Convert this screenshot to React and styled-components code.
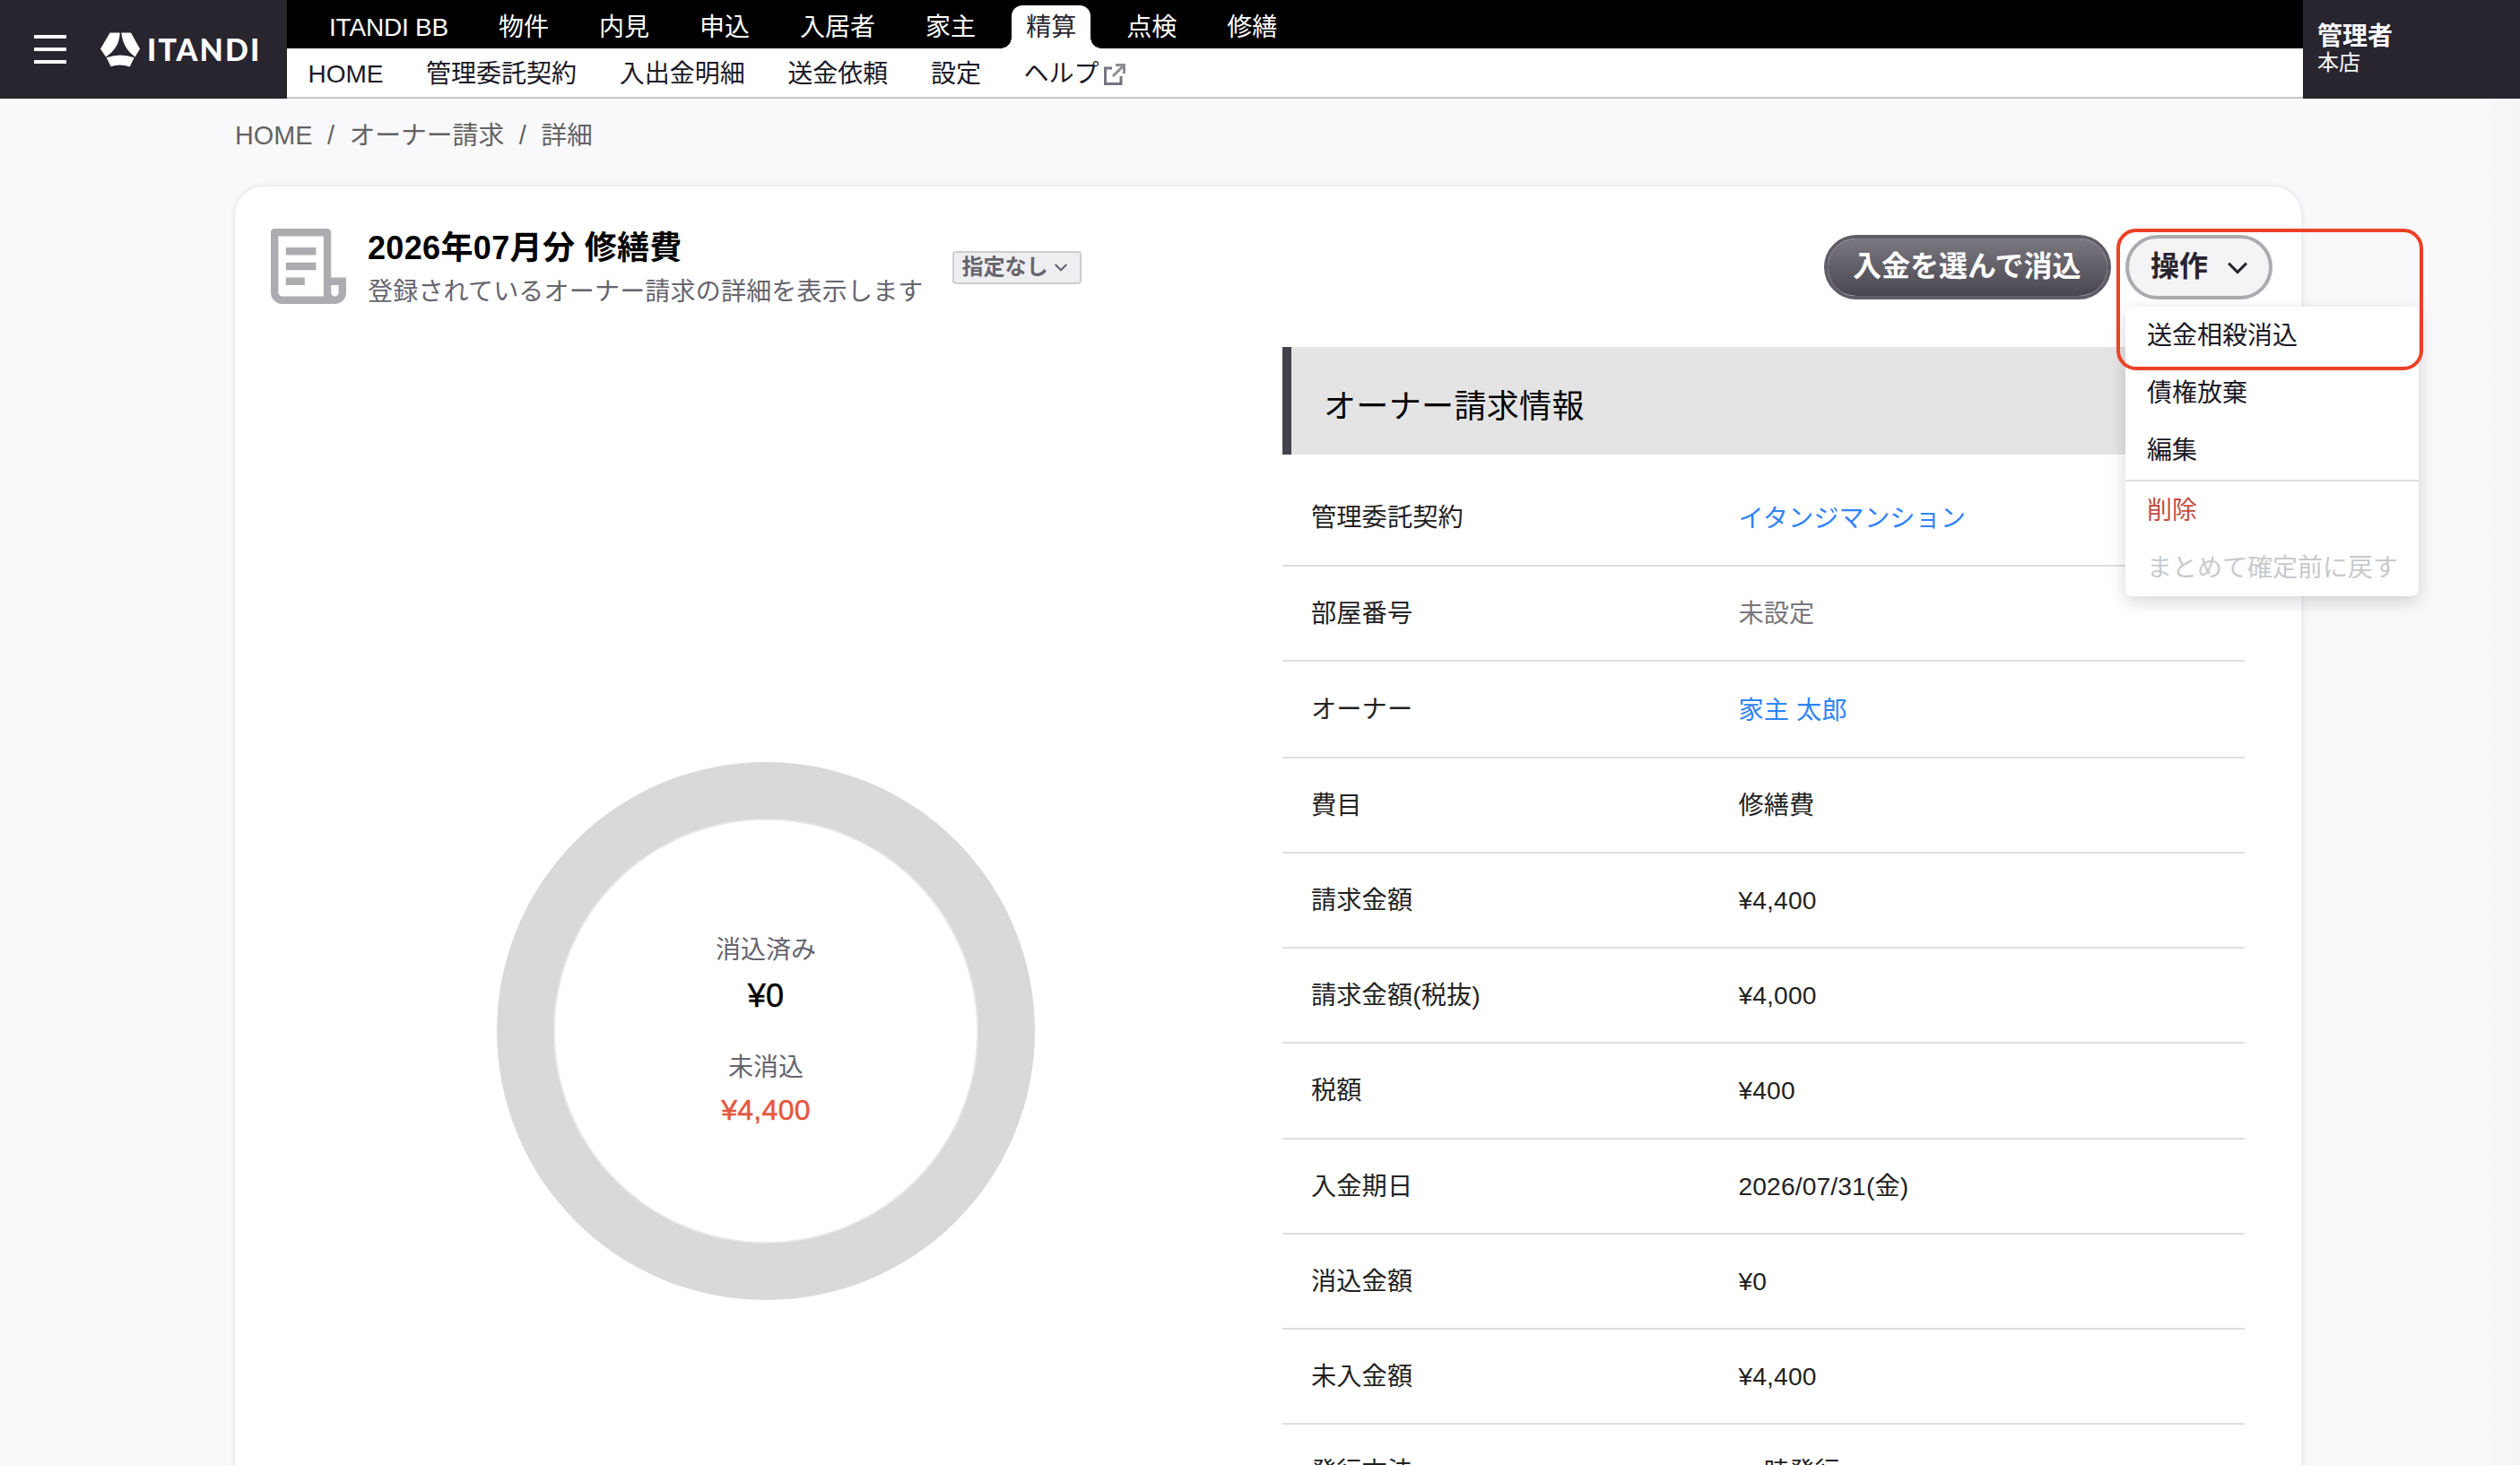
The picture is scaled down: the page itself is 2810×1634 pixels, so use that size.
import React from "react";
import styled, { createGlobalStyle, css } from "styled-components";

const GlobalStyle = createGlobalStyle`
  *, *::before, *::after { box-sizing: border-box; }
  html, body { margin: 0; padding: 0; }
  body {
    font-family: "Liberation Sans", "Noto Sans CJK JP", sans-serif;
    font-size: 28px;
    color: #1a1825;
    overflow: hidden;
  }
  button { font-family: inherit; }
  a { text-decoration: none; color: inherit; }
`;

const Page = styled.div`
  width: 100%;
  height: 1634px;
  overflow: hidden;
  background: linear-gradient(to left, #f5f5f7 0, #f9f9fb 40px) #f9f9fb;
`;

/* ---------- header ---------- */

const Header = styled.header`
  display: flex;
  height: 110px;
`;

const Brand = styled.div`
  display: flex;
  align-items: center;
  width: 320px;
  padding-left: 38px;
  background: #28252f;
`;

const MenuButton = styled.button`
  display: flex;
  flex-direction: column;
  gap: 10px;
  width: 36px;
  padding: 0;
  margin-right: 38px;
  border: 0;
  background: none;
`;

const MenuBar = styled.span`
  height: 4px;
  background: #fafaff;
`;

const LogoMark = styled.svg`
  width: 44px;
  height: 39px;
`;

const LogoText = styled.span`
  margin: 0 0 0 8px;
  font-family: Lato, "Liberation Sans", sans-serif;
  font-weight: 900;
  font-size: 34px;
  line-height: 40px;
  letter-spacing: 2.1px;
  color: #fff;
`;

const Navs = styled.div`
  flex: 1;
  display: flex;
  flex-direction: column;
  background: #fff;
  border-bottom: 2px solid #c8c8c8;
`;

const ProductNav = styled.nav`
  display: flex;
  align-items: flex-end;
  height: 54px;
  padding-left: 31px;
  gap: 24px;
  background: #000;
`;

const ProductLink = styled.a`
  position: relative;
  height: 48px;
  padding: 0 16px;
  line-height: 50px;
  white-space: nowrap;
  color: #fff;
  &:first-child {
    letter-spacing: -0.2px;
  }
  ${(p) =>
    p.$active &&
    css`
      background: #fff;
      color: #28252f;
      border-radius: 12px 12px 0 0;
      &::before,
      &::after {
        content: "";
        position: absolute;
        bottom: 0;
        width: 12px;
        height: 12px;
      }
      &::before {
        left: -12px;
        background: radial-gradient(circle at 0 0, transparent 11.5px, #fff 12px);
      }
      &::after {
        right: -12px;
        background: radial-gradient(circle at 100% 0, transparent 11.5px, #fff 12px);
      }
    `}
`;

const SectionNav = styled.nav`
  display: flex;
  align-items: center;
  height: 54px;
  gap: 47.6px;
  padding: 3px 0 0 23.5px;
`;

const SectionLink = styled.a`
  display: flex;
  align-items: center;
  gap: 4px;
  line-height: 51px;
  white-space: nowrap;
`;

const ExternalMark = styled.svg`
  width: 26px;
  height: 26px;
`;

const Account = styled.div`
  width: 242px;
  padding: 26px 0 0 16px;
  background: #28252f;
  color: #fafaff;
`;

const AccountName = styled.div`
  font-size: 28px;
  font-weight: 700;
  line-height: 30px;
`;

const AccountBranch = styled.div`
  font-size: 24px;
  line-height: 28px;
`;

/* ---------- page body ---------- */

const Breadcrumb = styled.nav`
  display: flex;
  gap: 16.5px;
  height: 98px;
  padding: 21px 0 0 262px;
  font-size: 28.8px;
  line-height: 40px;
  color: #636363;
`;

const Card = styled.main`
  width: 2304px;
  margin-left: 262px;
  background: #fff;
  border-radius: 32px;
  box-shadow: 0 0 6px rgba(30, 30, 60, 0.12);
`;

const CardHeader = styled.div`
  display: flex;
  align-items: center;
  height: 133px;
  padding: 47px 32px 0 40px;
`;

const BillIcon = styled.svg`
  width: 84px;
  height: 84px;
  margin: 0 24px 2px 0;
  fill: #adacb1;
`;

const Heading = styled.div`
  align-self: flex-start;
`;

const Title = styled.h1`
  margin: 0 0 7px;
  padding-top: 1px;
  font-size: 36px;
  line-height: 42px;
  font-weight: 700;
  letter-spacing: 0.35px;
  color: #000;
`;

const Subtitle = styled.p`
  margin: 0;
  line-height: 42px;
  letter-spacing: 0.2px;
  color: #66646e;
`;

const Tag = styled.button`
  display: flex;
  align-items: center;
  gap: 7px;
  height: 37px;
  width: 144px;
  margin-left: 32px;
  padding: 0 0 1px 9px;
  border: 2px solid #cdcdd0;
  border-radius: 4px;
  background: #eeeef0;
  color: #66646e;
  font-size: 24px;
  font-weight: 700;
  line-height: 30px;
`;

const Actions = styled.div`
  display: flex;
  gap: 16px;
  margin-left: auto;
`;

const PillButton = styled.button`
  display: flex;
  align-items: center;
  height: 72px;
  width: ${(p) => p.$width}px;
  padding: 0 0 1px ${(p) => (p.$primary ? 28 : 24)}px;
  border: 4px solid ${(p) => (p.$primary ? "#5f5c66" : "#ababb0")};
  border-radius: 36px;
  background: ${(p) =>
    p.$primary ? "linear-gradient(#7b7880, #4a464f) padding-box" : "#f4f4f6"};
  color: ${(p) => (p.$primary ? "#fff" : "#28252f")};
  font-size: 32px;
  font-weight: 700;
  line-height: 47px;
  white-space: nowrap;
`;

const Chevron = styled.svg`
  flex: none;
  width: ${(p) => p.$size}px;
  height: ${(p) => p.$size * 0.6}px;
  margin: 2px 0 0 ${(p) => p.$gap || 0}px;
  overflow: visible;
  fill: none;
  stroke: currentColor;
`;

const Dropdown = styled.div`
  position: relative;
  z-index: 2;
`;

const Menu = styled.ul`
  position: absolute;
  top: calc(100% + 8px);
  left: 0;
  width: 327px;
  margin: 0;
  padding: 0;
  list-style: none;
  background: #fff;
  border-radius: 8px;
  box-shadow: 0 6px 20px rgba(0, 0, 0, 0.16);
`;

const tones = { normal: "#1a1825", danger: "#c54a42", disabled: "#c9c9cc" };

const MenuItem = styled.li`
  height: 64px;
  padding-left: 24px;
  line-height: 66px;
  white-space: nowrap;
  color: ${(p) => tones[p.$tone || "normal"]};
`;

const MenuDivider = styled.li`
  height: 2px;
  margin: 1px 0 0;
  background: #dfdfe0;
`;

const Highlight = styled.div`
  position: absolute;
  top: -7px;
  left: -10px;
  width: 342px;
  height: 158px;
  border: 4px solid #ec4126;
  border-radius: 22px;
  pointer-events: none;
`;

const CardBody = styled.div`
  display: flex;
  padding: 46px 63px 0 16px;
`;

const ChartPane = styled.section`
  display: flex;
  align-items: center;
  justify-content: center;
  width: 1152px;
  height: 1526px;
`;

const Ring = styled.div`
  display: flex;
  flex-direction: column;
  align-items: center;
  width: 600px;
  height: 600px;
  padding-top: 187px;
  border-radius: 50%;
  background: radial-gradient(circle, #fff 234.5px, #ececec 235.5px, #e6e6e6 236.5px, #d9d9d9 237.5px);
`;

const RingLabel = styled.div`
  line-height: 46px;
  color: #66646e;
`;

const RingValue = styled.div`
  margin-bottom: ${(p) => (p.$due ? 0 : 29)}px;
  font-size: ${(p) => (p.$due ? 32 : 36)}px;
  line-height: ${(p) => (p.$due ? 48 : 56)}px;
  letter-spacing: 0.3px;
  -webkit-text-stroke: 0.5px currentColor;
  color: ${(p) => (p.$due ? "#e75540" : "#000")};
`;

const Details = styled.section`
  flex: 1;
`;

const DetailsTitle = styled.h2`
  height: 120px;
  margin: 0 0 17px;
  padding: 9px 0 0 36px;
  border-left: 10px solid #44434d;
  background: #e4e4e4;
  font-size: 36px;
  font-weight: 400;
  line-height: 115px;
  letter-spacing: 0.35px;
  color: #000;
`;

const Row = styled.div`
  display: grid;
  grid-template-columns: 476.5px 1fr;
  align-items: center;
  height: ${(p) => (p.$link ? 107.8 : 106.2)}px;
  padding: 2px 0 0 32px;
  border-bottom: 2px solid #dfdfe0;
  font-size: 28.16px;
  line-height: 40px;
  letter-spacing: 0.15px;
  color: #222;
`;

const valueColors = { link: "#3083f7", muted: "#77767c" };

const Value = styled.span`
  padding-top: ${(p) => (p.$kind === "link" ? 2 : 0)}px;
  color: ${(p) => valueColors[p.$kind] || "inherit"};
`;

const products = ["ITANDI BB", "物件", "内見", "申込", "入居者", "家主", "精算", "点検", "修繕"];
const sections = ["HOME", "管理委託契約", "入出金明細", "送金依頼", "設定"];

const rows = [
  { label: "管理委託契約", value: "イタンジマンション", kind: "link" },
  { label: "部屋番号", value: "未設定", kind: "muted" },
  { label: "オーナー", value: "家主 太郎", kind: "link" },
  { label: "費目", value: "修繕費" },
  { label: "請求金額", value: "¥4,400" },
  { label: "請求金額(税抜)", value: "¥4,000" },
  { label: "税額", value: "¥400" },
  { label: "入金期日", value: "2026/07/31(金)" },
  { label: "消込金額", value: "¥0" },
  { label: "未入金額", value: "¥4,400" },
  { label: "発行方法", value: "一時発行" },
];

function ChevronDown({ size, gap, weight }) {
  return (
    <Chevron viewBox="0 0 20 12" $size={size} $gap={gap} strokeWidth={weight}>
      <path d="M1 1.5 L10 10.5 L19 1.5" />
    </Chevron>
  );
}

function TopBar() {
  return (
    <Header>
      <Brand>
        <MenuButton aria-label="メニュー">
          <MenuBar />
          <MenuBar />
          <MenuBar />
        </MenuButton>
        <LogoMark viewBox="276 44 132 116" fill="#fff">
          <path d="M308 45H341C340 82 322 108 294 126L276 99Z" />
          <path d="M346 45H378L408 99L392 126C366 108 350 82 346 45Z" />
          <path d="M296 128Q343 112 389 128L374 159Q342 148 311 158Z" />
        </LogoMark>
        <LogoText>ITANDI</LogoText>
      </Brand>
      <Navs>
        <ProductNav>
          {products.map((name) => (
            <ProductLink key={name} href="#" $active={name === "精算"}>
              {name}
            </ProductLink>
          ))}
        </ProductNav>
        <SectionNav>
          {sections.map((name) => (
            <SectionLink key={name} href="#">
              {name}
            </SectionLink>
          ))}
          <SectionLink href="#">
            ヘルプ
            <ExternalMark viewBox="0 0 26 26" fill="none" strokeWidth="3">
              <path d="M10 6H2.5V23.5H20V15" stroke="#76757d" />
              <path d="M14 2.5H23.5V12M23 3L11 15" stroke="#8d8c93" />
            </ExternalMark>
          </SectionLink>
        </SectionNav>
      </Navs>
      <Account>
        <AccountName>管理者</AccountName>
        <AccountBranch>本店</AccountBranch>
      </Account>
    </Header>
  );
}

function ActionsMenu() {
  return (
    <Dropdown>
      <PillButton $width={164}>
        操作
        <ChevronDown size={22} gap={22} weight={2.8} />
      </PillButton>
      <Menu>
        <MenuItem>送金相殺消込</MenuItem>
        <MenuItem>債権放棄</MenuItem>
        <MenuItem>編集</MenuItem>
        <MenuDivider />
        <MenuItem $tone="danger">削除</MenuItem>
        <MenuItem $tone="disabled">まとめて確定前に戻す</MenuItem>
      </Menu>
      <Highlight />
    </Dropdown>
  );
}

export default function App() {
  return (
    <Page>
      <GlobalStyle />
      <TopBar />
      <Breadcrumb>
        <a href="#">HOME</a>
        <span>/</span>
        <a href="#">オーナー請求</a>
        <span>/</span>
        <span>詳細</span>
      </Breadcrumb>
      <Card>
        <CardHeader>
          <BillIcon viewBox="2 2 20 20">
            <path d="M19 22H5a3 3 0 0 1-3-3V3a1 1 0 0 1 1-1h14a1 1 0 0 1 1 1v12h4v4a3 3 0 0 1-3 3zm-1-5v2a1 1 0 0 0 2 0v-2h-2zm-2 3V4H4v15a1 1 0 0 0 1 1h11zM6 7h8v2H6V7zm0 4h8v2H6v-2zm0 4h5v2H6v-2z" />
          </BillIcon>
          <Heading>
            <Title>2026年07月分 修繕費</Title>
            <Subtitle>登録されているオーナー請求の詳細を表示します</Subtitle>
          </Heading>
          <Tag>
            指定なし
            <ChevronDown size={14} weight={3} />
          </Tag>
          <Actions>
            <PillButton $primary $width={320}>
              入金を選んで消込
            </PillButton>
            <ActionsMenu />
          </Actions>
        </CardHeader>
        <CardBody>
          <ChartPane>
            <Ring>
              <RingLabel>消込済み</RingLabel>
              <RingValue>¥0</RingValue>
              <RingLabel>未消込</RingLabel>
              <RingValue $due>¥4,400</RingValue>
            </Ring>
          </ChartPane>
          <Details>
            <DetailsTitle>オーナー請求情報</DetailsTitle>
            {rows.map((row) => (
              <Row key={row.label} $link={row.kind === "link"}>
                <span>{row.label}</span>
                <Value $kind={row.kind}>{row.value}</Value>
              </Row>
            ))}
          </Details>
        </CardBody>
      </Card>
    </Page>
  );
}
